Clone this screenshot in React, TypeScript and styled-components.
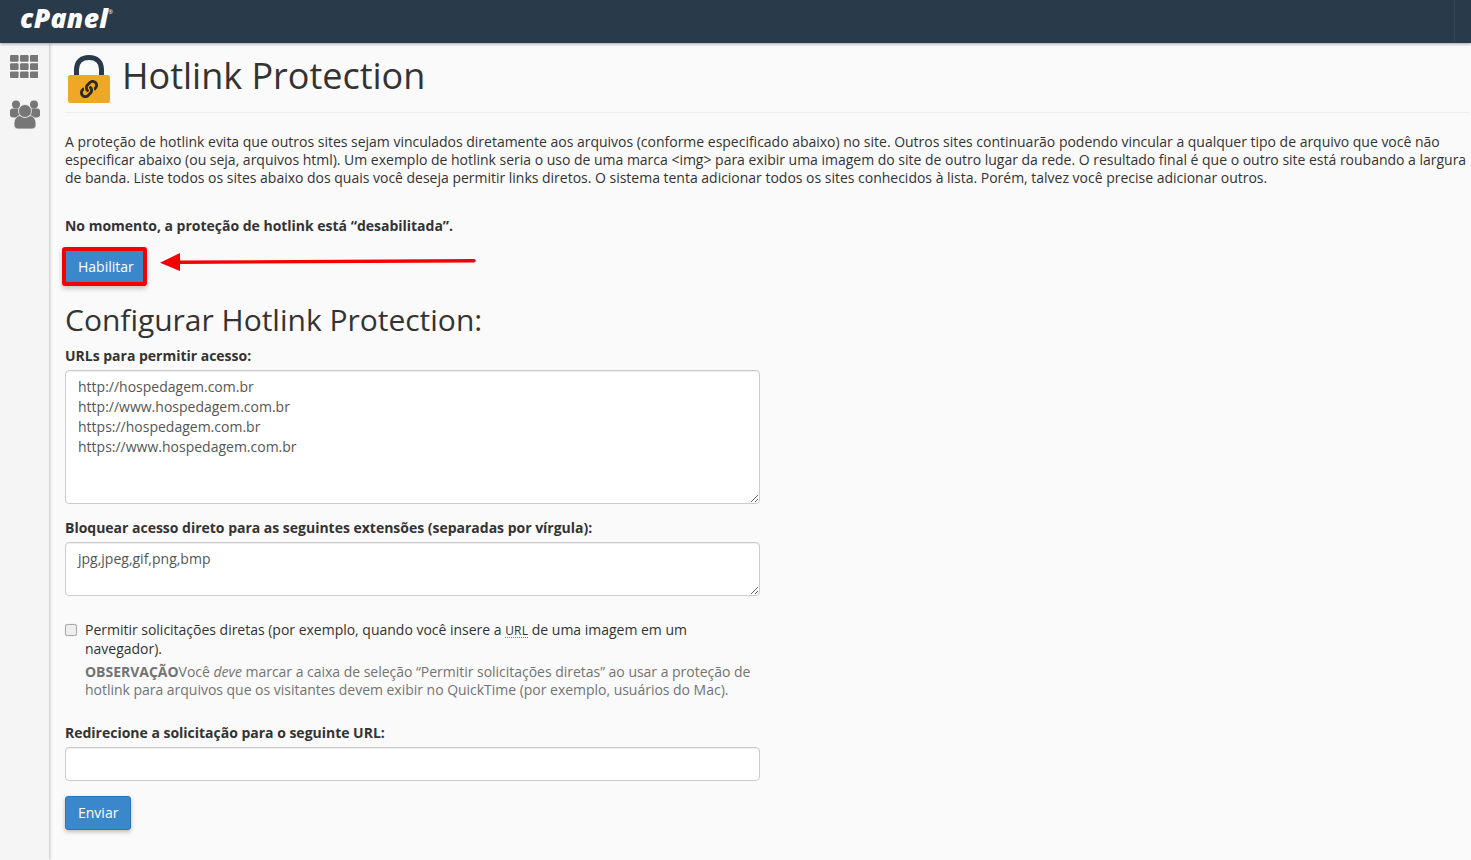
import React from "react";
import styled, { createGlobalStyle } from "styled-components";
import { FaLink } from "react-icons/fa";

const Global = createGlobalStyle`
  html, body { margin: 0; padding: 0; height: 100%; overflow: hidden; background: #fafafa; }
  body { font-family: "Open Sans", "Liberation Sans", sans-serif; font-size: 14px; line-height: 18px; color: #333; letter-spacing: -0.012px; }
  * { box-sizing: border-box; }
`;

const Page = styled.div`
  display: flex;
  flex-direction: column;
  height: 860px;
  width: 1471px;
  overflow: hidden;
`;
const TopBar = styled.header`
  height: 43px;
  flex: none;
  background: #293a4a;
  display: flex;
  align-items: flex-start;
  position: relative;
  z-index: 2;
  padding: 0 0 0 20px;
  box-shadow: 0 1px 3px rgba(0, 0, 0, 0.35);
  &::after {
    content: "";
    position: absolute;
    right: 16px;
    top: 0;
    bottom: 1px;
    width: 1px;
    background: #344656;
  }
`;
const Logo = styled.span`
  font-weight: 800;
  font-style: italic;
  font-size: 26.500px;
  line-height: 36px;
  letter-spacing: 0.3px;
  color: #fff;
  position: relative;
  sup { position: absolute; right: -5px; top: 9px; font-size: 6px; line-height: 6px; font-weight: 400; }
`;
const Body = styled.div`
  display: flex;
  flex: 1;
  min-height: 0;
`;
const Sidebar = styled.nav`
  width: 49px;
  flex: none;
  background: #f5f5f5;
  display: flex;
  flex-direction: column;
  align-items: flex-start;
  padding: 12px 0 0 10px;
  gap: 22px;
  box-shadow: 1px 0 3px rgba(0, 0, 0, 0.22);
  position: relative;
`;
const Main = styled.main`
  flex: 1;
  min-width: 0;
  padding: 0 2px 0 16px;
`;
const Header = styled.div`
  display: flex;
  align-items: flex-start;
  height: 70px;
  padding: 12px 0 0 3px;
  gap: 12px;
  border-bottom: 1px solid #eeeeee;
`;
const Title = styled.h1`
  margin: 0;
  font-size: 36px;
  line-height: 42px;
  font-weight: 400;
  color: #333;
`;
const Intro = styled.p`
  margin: 20px 0 0;
  line-height: 18px;
  color: #333;
`;
const Status = styled.p`
  margin: 30px 0 0;
  font-weight: 700;
`;
const Highlight = styled.div`
  position: relative;
  margin-top: 12px;
`;
const Button = styled.button`
  display: block;
  font: inherit;
  color: #fff;
  background: #3a87cc;
  border: 1px solid #2f75b5;
  border-radius: 3px;
  height: 34px;
  padding: 0 12px;
  box-shadow: 0 2px 4px rgba(0, 0, 0, 0.25);
`;
const MarkedButton = styled(Button)`
  width: 85px;
  height: 39px;
  margin-left: -3px;
  padding: 0 0 0 12px;
  text-align: left;
  border: 4px solid #f40000;
  box-shadow: 0 3px 5px rgba(0, 0, 0, 0.2);
`;
const Arrow = styled.svg`
  position: absolute;
  left: 95px;
  top: 3px;
`;
const SubTitle = styled.h2`
  margin: 16px 0 0;
  font-size: 30px;
  line-height: 36px;
  font-weight: 400;
`;
const Form = styled.form`
  width: 695px;
`;
const Label = styled.label<{ $top: number }>`
  display: block;
  font-weight: 700;
  margin-top: ${(p) => p.$top}px;
  line-height: 18px;
`;
const Area = styled.textarea<{ $h: number }>`
  display: block;
  width: 100%;
  height: ${(p) => p.$h}px;
  margin-top: 5px;
  padding: 6px 12px;
  font: inherit;
  letter-spacing: 0;
  line-height: 20px;
  color: #555;
  background: #fff;
  border: 1px solid #ccc;
  border-radius: 4px;
  box-shadow: inset 0 1px 1px rgba(0, 0, 0, 0.075);
  outline: none;
`;
const TextInput = styled.input`
  display: block;
  width: 100%;
  height: 34px;
  margin-top: 5px;
  background: #fff;
  border: 1px solid #ccc;
  border-radius: 4px;
  box-shadow: inset 0 1px 1px rgba(0, 0, 0, 0.075);
`;
const CheckRow = styled.div`
  display: flex;
  gap: 8px;
  margin-top: 24px;
`;
const Check = styled.input`
  appearance: none;
  width: 12px;
  height: 12px;
  margin: 4px 0 0 0;
  flex: none;
  background: #eeeeee;
  border: 1px solid #a8a8a8;
  border-radius: 2.500px;
  box-shadow: 0 0 1px rgba(0, 0, 0, 0.25);
`;
const CheckText = styled.div`
  color: #333;
  line-height: 19px;
`;
const Abbr = styled.span`
  font-size: 12px;
  line-height: 12px;
  letter-spacing: 0.2px;
  display: inline-block;
  border-bottom: 1px dotted #777;
`;
const Note = styled.div`
  margin-top: 5px;
  color: #737373;
  line-height: 18px;
  letter-spacing: -0.022px;
  b { font-weight: 700; }
`;
const SubmitWrap = styled.div`
  margin-top: 15px;
`;

const Grid = () => (
  <svg width="28" height="23" viewBox="0 0 28 23" fill="#777">
    {[0, 1, 2].flatMap((r) =>
      [0, 1, 2].map((c) => <rect key={`${r}${c}`} x={c * 10} y={r * 8.2} width="8.6" height="6.8" rx="1.2" />)
    )}
  </svg>
);
const Users = () => (
  <svg width="30" height="29" viewBox="0 0 30 29" fill="#777">
    <circle cx="6" cy="4.600" r="4" />
    <circle cx="24" cy="4.600" r="4" />
    <path d="M0 11c0-1.600 1.200-2.500 2.500-2.500h7c1.300 0 2.500 1 2.500 2.500v4c0 1.400-2 2.500-4 2.500H3c-1.800 0-3-1-3-2.500z" />
    <path d="M18 11c0-1.500 1.200-2.500 2.500-2.500h7c1.300 0 2.500.9 2.500 2.500v4c0 1.500-1.200 2.500-3 2.500h-5c-2 0-4-1.100-4-2.500z" />
    <path
      d="M4 24c0-5 2.500-8 6-8.500 1.400 1 3.100 1.500 5 1.500s3.600-.5 5-1.500c3.500.5 6 3.500 6 8.500v1c0 2.400-1.700 4-4 4H8c-2.300 0-4-1.600-4-4z"
      stroke="#f5f5f5"
      strokeWidth="0.8"
    />
    <circle cx="15" cy="11" r="6.500" stroke="#f5f5f5" strokeWidth="0.8" />
  </svg>
);
const Lock = () => (
  <svg width="42" height="48" viewBox="0 0 42 48">
    <path d="M8.500 21V14.500C8.500 6.500 13.500 2.500 21 2.500S33.500 6.500 33.500 14.500V21" fill="none" stroke="#2a3a49" strokeWidth="5" />
    <rect x="0" y="20" width="42" height="28" rx="2.500" fill="#efa726" />
    <FaLink x={12} y={25} size={18} color="#2f2a1f" />
  </svg>
);

export default function App() {
  return (
    <Page>
      <Global />
      <TopBar>
        <Logo>
          cPanel<sup>®</sup>
        </Logo>
      </TopBar>
      <Body>
        <Sidebar>
          <Grid />
          <Users />
        </Sidebar>
        <Main>
          <Header>
            <Lock />
            <Title>Hotlink Protection</Title>
          </Header>
          <Intro>
            A proteção de hotlink evita que outros sites sejam vinculados diretamente aos arquivos (conforme especificado abaixo) no site. Outros sites continuarão podendo vincular a qualquer tipo de arquivo que você não especificar abaixo (ou seja, arquivos html). Um exemplo de hotlink seria o uso de uma marca &lt;img&gt; para exibir uma imagem do site de outro lugar da rede. O resultado final é que o outro site está roubando a largura de banda. Liste todos os sites abaixo dos quais você deseja permitir links diretos. O sistema tenta adicionar todos os sites conhecidos à lista. Porém, talvez você precise adicionar outros.
          </Intro>
          <Status>No momento, a proteção de hotlink está “desabilitada”.</Status>
          <Highlight>
            <MarkedButton type="button">Habilitar</MarkedButton>
            <Arrow width="320" height="24" viewBox="0 0 320 24">
              <path d="M19 12.300L314 10.700" stroke="#f40000" strokeWidth="3.400" strokeLinecap="round" fill="none" />
              <path d="M0 12.700L20 3V21Z" fill="#f40000" />
            </Arrow>
          </Highlight>
          <Form>
            <SubTitle>Configurar Hotlink Protection:</SubTitle>
            <Label $top={9}>URLs para permitir acesso:</Label>
            <Area $h={134} readOnly value={"http://hospedagem.com.br\nhttp://www.hospedagem.com.br\nhttps://hospedagem.com.br\nhttps://www.hospedagem.com.br"} />
            <Label $top={15}>Bloquear acesso direto para as seguintes extensões (separadas por vírgula):</Label>
            <Area $h={54} readOnly value="jpg,jpeg,gif,png,bmp" />
            <CheckRow>
              <Check type="checkbox" />
              <CheckText>
                Permitir solicitações diretas (por exemplo, quando você insere a <Abbr>URL</Abbr> de uma imagem em um navegador).
                <Note>
                  <b>OBSERVAÇÃO</b>Você <em>deve</em> marcar a caixa de seleção “Permitir solicitações diretas” ao usar a proteção de hotlink para arquivos que os visitantes devem exibir no QuickTime (por exemplo, usuários do Mac).
                </Note>
              </CheckText>
            </CheckRow>
            <Label $top={25}>Redirecione a solicitação para o seguinte URL:</Label>
            <TextInput type="text" />
            <SubmitWrap>
              <Button type="button">Enviar</Button>
            </SubmitWrap>
          </Form>
        </Main>
      </Body>
    </Page>
  );
}
